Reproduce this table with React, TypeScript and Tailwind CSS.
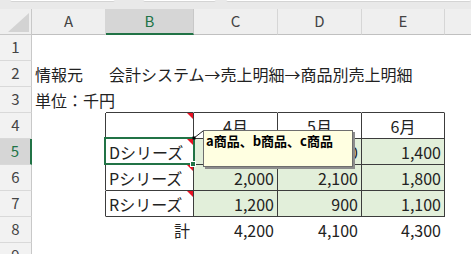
import React from 'react'

const font = { fontFamily: '"Noto Sans CJK JP", "Noto Sans", sans-serif' }

// column widths incl. right grid line: A, B, C, D, E
const colW = ['w-[74px]', 'w-[88px]', 'w-[84px]', 'w-[84px]', 'w-[83px]']
const letters = ['A', 'B', 'C', 'D', 'E']

type CellSpec = {
  text?: string
  align?: 'left' | 'right' | 'center'
  right?: boolean
  bottom?: boolean
  green?: boolean
  flag?: boolean
  overflow?: boolean
}

const T = '#3c3c3c'

function Flag() {
  return (
    <svg className="absolute top-0 right-0" width="6" height="6" viewBox="0 0 6 6">
      <polygon points="0,0 6,0 6,6" fill="#e81123" />
    </svg>
  )
}

function Cell({ spec, w }: { spec: CellSpec; w: string }) {
  const align =
    spec.align === 'right' ? 'justify-end pr-[3px]' : spec.align === 'center' ? 'justify-center' : 'justify-start pl-[3px]'
  return (
    <div
      className={`relative flex h-[26px] shrink-0 items-center border-r border-b ${w} ${align} ${
        spec.right ? 'border-r-[#3c3c3c]' : 'border-r-transparent'
      } ${spec.bottom ? 'border-b-[#3c3c3c]' : 'border-b-transparent'} ${spec.green ? 'bg-[#e2efda]' : ''} ${
        spec.overflow ? 'overflow-visible' : 'overflow-hidden'
      }`}
    >
      {spec.text && (
        <span className="whitespace-nowrap text-[16px] leading-[20px] text-[#222]">{spec.text}</span>
      )}
      {spec.flag && <Flag />}
    </div>
  )
}

const tb = { right: true, bottom: true }

const rows: CellSpec[][] = [
  [{}, {}, {}, {}, {}],
  [{ text: '情報元' }, { text: '会計システム→売上明細→商品別売上明細', overflow: true }, {}, {}, {}],
  [{ text: '単位：千円', overflow: true }, { bottom: true }, { bottom: true }, { bottom: true }, { bottom: true }],
  [
    { right: true },
    { ...tb, flag: true },
    { ...tb, text: '4月', align: 'center' },
    { ...tb, text: '5月', align: 'center' },
    { ...tb, text: '6月', align: 'center' },
  ],
  [
    { right: true },
    { ...tb, flag: true, text: 'Dシリーズ' },
    { ...tb, green: true, text: '1,000', align: 'right' },
    { ...tb, green: true, text: '1,100', align: 'right' },
    { ...tb, green: true, text: '1,400', align: 'right' },
  ],
  [
    { right: true },
    { ...tb, flag: true, text: 'Pシリーズ' },
    { ...tb, green: true, text: '2,000', align: 'right' },
    { ...tb, green: true, text: '2,100', align: 'right' },
    { ...tb, green: true, text: '1,800', align: 'right' },
  ],
  [
    { right: true },
    { ...tb, flag: true, text: 'Rシリーズ' },
    { ...tb, green: true, text: '1,200', align: 'right' },
    { ...tb, green: true, text: '900', align: 'right' },
    { ...tb, green: true, text: '1,100', align: 'right' },
  ],
  [
    {},
    { text: '計', align: 'right' },
    { text: '4,200', align: 'right' },
    { text: '4,100', align: 'right' },
    { text: '4,300', align: 'right' },
  ],
  [{}, {}, {}, {}, {}],
]

export default function App() {
  return (
    <div className="relative h-[254px] w-[471px] overflow-hidden bg-white" style={font}>
      {/* formula bar remnants */}
      <div className="flex h-[9px] gap-0 bg-[#e9e9e9]">
        <div className="ml-[10px] h-[2px] w-[105px] rounded-b-sm border-b border-[#d4d4d4] bg-white" />
        <div className="ml-[28px] h-[2px] w-[73px] rounded-b-sm border-b border-[#d4d4d4] bg-white" />
        <div className="ml-[10px] h-[2px] flex-1 rounded-b-sm border-b border-[#d4d4d4] bg-white" />
      </div>

      {/* column headers */}
      <div className="flex h-[26px] bg-[#efefef]">
        <div className="relative h-[26px] w-[32px] shrink-0 border-r border-b border-[#c8c8c8]">
          <svg className="absolute left-[8px] top-[4px]" width="21" height="19" viewBox="0 0 21 19">
            <polygon points="21,0 21,19 0,19" fill="#d3d3d3" />
          </svg>
        </div>
        {letters.map((l, i) =>
          l === 'B' ? (
            <div
              key={l}
              className={`flex h-[26px] shrink-0 items-center justify-center border-r border-r-[#c8c8c8] border-b-2 border-b-[#217346] bg-[#d6d6d6] text-[15px] text-[#217346] ${colW[i]}`}
            >
              {l}
            </div>
          ) : (
            <div
              key={l}
              className={`flex h-[26px] shrink-0 items-center justify-center border-r border-b border-r-[#d6d6d6] border-b-[#c0c0c0] text-[15px] text-[#444] ${colW[i]}`}
            >
              {l}
            </div>
          )
        )}
        <div className="h-[26px] flex-1 border-b border-[#c0c0c0]" />
      </div>

      {/* grid rows */}
      {rows.map((r, ri) => {
        const sel = ri === 4
        return (
          <div key={ri} className="flex">
            <div
              className={`flex h-[26px] w-[32px] shrink-0 items-center justify-center border-b border-b-[#d9d9d9] text-[15px] ${
                sel
                  ? 'border-r-2 border-r-[#217346] bg-[#d6d6d6] text-[#217346]'
                  : 'border-r border-r-[#c8c8c8] bg-[#f2f2f2] text-[#444]'
              }`}
            >
              {ri + 1}
            </div>
            {r.map((c, ci) => (
              <Cell key={ci} spec={c} w={colW[ci]} />
            ))}
          </div>
        )
      })}

      {/* active cell B5 */}
      <div className="absolute left-[104px] top-[137px] h-[28px] w-[91px] border-2 border-[#217346]" />
      <div className="absolute left-[190px] top-[161px] h-[6px] w-[6px] border border-white bg-[#217346]" />

      {/* comment */}
      <svg className="absolute left-[190px] top-[128px]" width="16" height="14" viewBox="0 0 16 14">
        <line x1="4" y1="10" x2="13" y2="3" stroke="#222" strokeWidth="1" />
        <rect x="2.5" y="8.5" width="3" height="3" fill="#000" />
      </svg>
      <div className="absolute left-[203px] top-[130px] h-[37px] w-[150px] border border-[#6e6e6e] bg-[#ffffe1] shadow-[2px_2px_0_0_#8c8c8c]">
        <div className="whitespace-nowrap pl-[2px] pt-[1px] text-[13px] font-bold leading-[17px] text-black">
          a商品、b商品、c商品
        </div>
      </div>
    </div>
  )
}
